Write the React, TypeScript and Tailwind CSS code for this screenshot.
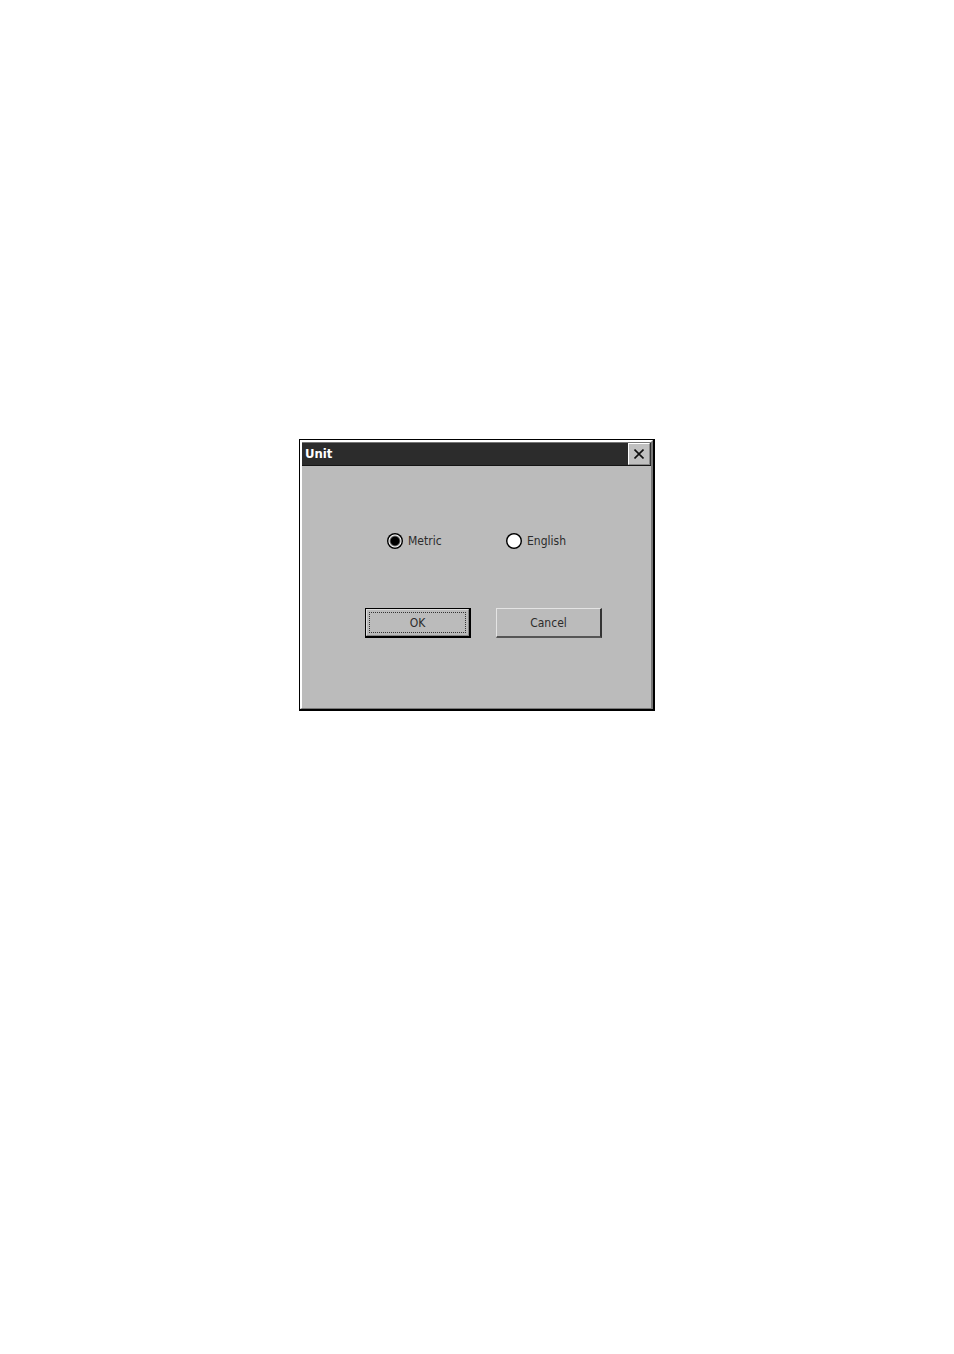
import { useState } from "react";

const units = [
  { value: "metric", label: "Metric" },
  { value: "english", label: "English" },
];

const UnitRadio = ({
  value,
  label,
  checked,
  onChange,
}: {
  value: string;
  label: string;
  checked: boolean;
  onChange: (value: string) => void;
}) => {
  return (
    <label className="flex items-center gap-[5px]">
      <input
        type="radio"
        name="unit"
        value={value}
        checked={checked}
        onChange={() => onChange(value)}
        className="size-4 appearance-none rounded-full bg-[radial-gradient(circle,#fff_6px,#000_7px)] checked:bg-[radial-gradient(circle,#000_4px,#fff_6px,#fff_6px,#000_7px)]"
      />
      {label}
    </label>
  );
};

const UnitDialog = () => {
  const [unit, setUnit] = useState("metric");

  return (
    <div
      role="dialog"
      aria-labelledby="unit-title"
      className="w-full max-w-[356px] border border-r-2 border-b-2 border-black"
    >
      <div className="border-t-2 border-r-2 border-b border-l-2 border-t-white border-l-white border-r-[#777] border-b-[#777] bg-[#bbb]">
        {/* Title bar */}
        <div className="flex h-6 items-center justify-between border-t border-b border-t-[#777] border-b-[#151515] bg-[#2c2c2c] pr-px pl-[3px]">
          <h1 id="unit-title" className="text-[13px] font-bold text-white">
            Unit
          </h1>
          <button
            type="button"
            aria-label="Close"
            className="flex h-[22px] w-[22px] items-center justify-center border border-t-white border-l-white border-r-[#888] border-b-[#888] bg-[#c0c0c0]"
          >
            <svg width="10" height="10" viewBox="0 0 10 10" stroke="#111" strokeWidth="1.6">
              <path d="M0.5 0.5L9.5 9.5M9.5 0.5L0.5 9.5" />
            </svg>
          </button>
        </div>

        <form
          className="flex flex-col px-[63px] pt-[67px] pb-[70px]"
          onSubmit={(e) => e.preventDefault()}
        >
          <div className="grid grid-cols-[119px_1fr] pl-[22px] leading-4">
            {units.map((item) => (
              <UnitRadio
                key={item.value}
                value={item.value}
                label={item.label}
                checked={unit === item.value}
                onChange={setUnit}
              />
            ))}
          </div>

          <div className="-mr-4 mt-[59px] flex gap-[25px]">
            <button
              type="submit"
              className="h-[30px] w-[106px] border border-r-2 border-b-2 border-black bg-[#bbb]"
            >
              <span className="flex h-full border border-t-[#ddd] border-l-[#ddd] border-r-[#888] border-b-[#888] p-[2px]">
                <span className="flex flex-1 items-center justify-center border border-dotted border-[#333]">
                  OK
                </span>
              </span>
            </button>
            <button
              type="button"
              className="h-[30px] w-[106px] border border-r-2 border-b-2 border-t-[#e4e4e4] border-l-[#e4e4e4] border-r-[#333] border-b-[#555] bg-[#bbb]"
            >
              Cancel
            </button>
          </div>
        </form>
      </div>
    </div>
  );
};

const App = () => {
  return (
    <main className="flex min-h-screen items-start justify-center bg-white pt-[439px] font-['DejaVu_Sans_Condensed','DejaVu_Sans',sans-serif] text-xs text-[#2c2c2c]">
      <UnitDialog />
    </main>
  );
};

export default App;
